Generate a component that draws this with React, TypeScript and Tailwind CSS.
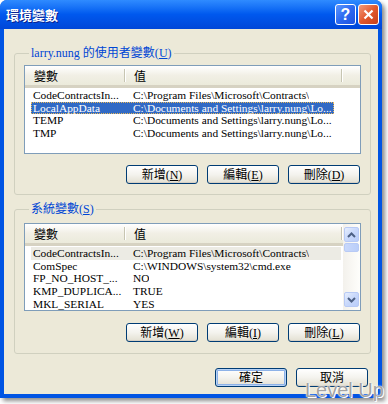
import React from "react";

const serif = "font-['Liberation_Serif','Noto_Sans_CJK_TC',serif]";

function Header({ w2 }: { w2: number }) {
  return (
    <div className="relative flex h-[22px] shrink-0 bg-gradient-to-b from-[#FFFFFF] via-[#F1EFE5] to-[#EBEADB] border-b-[3px] border-[#D6D2C2] text-[12px] text-black">
      <div className="flex w-[99px] items-center pl-[9px] leading-none">變數</div>
      <div className="my-[3px] w-[2px] border-l border-[#C7C5B2] bg-white" />
      <div className="flex items-center pl-[8px] leading-none" style={{ width: w2 }}>
        值
      </div>
      <div className="my-[3px] w-[2px] border-l border-[#C7C5B2] bg-white" />
    </div>
  );
}

type Row = { k: string; v: string; sel?: "blue" | "gray" };

function Rows({ rows, width }: { rows: Row[]; width: number }) {
  return (
    <div className={`flex flex-col pt-[1px] ${serif} text-[11.4px] leading-[12px]`}>
      {rows.map((r, i) => (
        <div key={i} className="flex h-[12.6px] pl-[6px]">
          <div
            className={
              r.sel === "blue"
                ? "flex items-center bg-[#316AC5] text-white outline outline-1 outline-dotted outline-[#E7B85A] -outline-offset-1"
                : r.sel === "gray"
                ? "flex items-center bg-[#ECEBE4] text-black"
                : "flex items-center text-black"
            }
            style={{ width }}
          >
            <div className="w-[93px] shrink-0 overflow-hidden whitespace-nowrap pl-[2px]">{r.k}</div>
            <div className="overflow-hidden whitespace-nowrap pl-[9px]">{r.v}</div>
          </div>
        </div>
      ))}
    </div>
  );
}

function Btn({ label, u, def }: { label: string; u: string; def?: boolean }) {
  return (
    <div
      className={
        def
          ? "flex h-[19px] w-[72px] items-center justify-center rounded-[3px] border border-[#003C74] bg-gradient-to-b from-white via-[#F4F3EE] to-[#E3E0D2] text-[12px] leading-none text-black shadow-[inset_0_0_0_1px_#B7D2F6,inset_0_0_0_2px_#8DB2E8]"
          : "flex h-[19px] w-[72px] items-center justify-center rounded-[3px] border border-[#003C74] bg-gradient-to-b from-white via-[#F4F3EE] to-[#E3E0D2] text-[12px] leading-none text-black shadow-[inset_0_-1px_0_#D6D0C5]"
      }
    >
      <span className={`${serif} text-[12px]`}>
        {label}
        {u ? (
          <>
            (<span className="underline underline-offset-1">{u}</span>)
          </>
        ) : null}
      </span>
    </div>
  );
}

function Chevron({ up }: { up?: boolean }) {
  return (
    <svg width="9" height="6" viewBox="0 0 9 6">
      <path
        d={up ? "M1 5 L4.5 1.5 L8 5" : "M1 1 L4.5 4.5 L8 1"}
        fill="none"
        stroke="#4D6185"
        strokeWidth="2"
      />
    </svg>
  );
}

function SBtn({ children }: { children?: React.ReactNode }) {
  return (
    <div className="flex h-[15px] w-[15px] shrink-0 items-center justify-center rounded-[2px] border border-[#B8CAF5] bg-gradient-to-br from-[#E6EEFD] via-[#C8D8FB] to-[#B9CDF9]">
      {children}
    </div>
  );
}

export default function App() {
  const rows1: Row[] = [
    { k: "CodeContractsIn...", v: "C:\\Program Files\\Microsoft\\Contracts\\" },
    { k: "LocalAppData", v: "C:\\Documents and Settings\\larry.nung\\Lo...", sel: "blue" },
    { k: "TEMP", v: "C:\\Documents and Settings\\larry.nung\\Lo..." },
    { k: "TMP", v: "C:\\Documents and Settings\\larry.nung\\Lo..." },
  ];
  const rows2: Row[] = [
    { k: "CodeContractsIn...", v: "C:\\Program Files\\Microsoft\\Contracts\\", sel: "gray" },
    { k: "ComSpec", v: "C:\\WINDOWS\\system32\\cmd.exe" },
    { k: "FP_NO_HOST_...", v: "NO" },
    { k: "KMP_DUPLICA...", v: "TRUE" },
    { k: "MKL_SERIAL", v: "YES" },
  ];

  return (
    <div className="relative h-[404px] w-[388px] overflow-hidden bg-white font-['Noto_Sans_CJK_TC',sans-serif]">
      <div className="flex h-[398px] w-[382px] flex-col overflow-hidden rounded-t-[7px] bg-[#0054E3] shadow-[3px_3px_4px_rgba(0,0,0,0.45)]">
        {/* title bar */}
        <div className="flex h-[29px] shrink-0 items-center bg-gradient-to-b from-[#2F8BFF] via-[#0058EE] to-[#0046D8] pl-[6px] pr-[3px]">
          <div className="flex-1 text-[13px] font-bold leading-none text-white [text-shadow:1px_1px_0_#0A1E8C]">
            環境變數
          </div>
          <div className="flex gap-[2px]">
            <div className="flex h-[21px] w-[21px] items-center justify-center rounded-[3px] border border-white bg-gradient-to-br from-[#5C96FF] via-[#2D69F0] to-[#1E52E0] text-[16px] font-bold leading-none text-white font-['Liberation_Sans',sans-serif]">
              ?
            </div>
            <div className="flex h-[21px] w-[21px] items-center justify-center rounded-[3px] border border-white bg-gradient-to-br from-[#F09A7A] via-[#E2582C] to-[#C6401A]">
              <svg width="11" height="11" viewBox="0 0 11 11">
                <path d="M1.5 1.5 L9.5 9.5 M9.5 1.5 L1.5 9.5" stroke="white" strokeWidth="2.2" />
              </svg>
            </div>
          </div>
        </div>
        {/* body */}
        <div className="mx-[4px] mb-[4px] flex flex-1 flex-col bg-[#ECE9D8] px-[10px] pt-[17px]">
          <fieldset className="w-[357px] rounded-[3px] border border-[#D0D0BF] px-[9px] pb-[10px]">
            <legend className={`ml-[5px] h-[14px] px-[2px] text-[12px] leading-[14px] text-[#0046D5] ${serif}`}>
              larry.nung 的使用者變數(<span className="underline underline-offset-1">U</span>)
            </legend>
            <div className="mt-[5px] flex h-[89px] flex-col border border-[#7F9DB9] bg-white">
              <Header w2={215} />
              <Rows rows={rows1} width={303} />
            </div>
            <div className="mt-[11px] flex justify-end gap-[9px] pr-[1px]">
              <Btn label="新增" u="N" />
              <Btn label="編輯" u="E" />
              <Btn label="刪除" u="D" />
            </div>
          </fieldset>
          <fieldset className="mt-[7px] w-[357px] rounded-[3px] border border-[#D0D0BF] px-[9px] pb-[11px]">
            <legend className={`ml-[5px] h-[14px] px-[2px] text-[12px] leading-[14px] text-[#0046D5] ${serif}`}>
              系統變數(<span className="underline underline-offset-1">S</span>)
            </legend>
            <div className="mt-[7px] flex h-[88px] border border-[#7F9DB9] bg-white">
              <div className="flex flex-1 flex-col overflow-hidden">
                <Header w2={215} />
                <Rows rows={rows2} width={310} />
              </div>
              <div className="flex w-[17px] flex-col bg-gradient-to-r from-[#F3F1EC] to-[#FEFEFB] px-[1px] py-[3px]">
                <SBtn>
                  <Chevron up />
                </SBtn>
                <div className="mt-[1px] h-[9px] w-[15px] rounded-[2px] border border-[#B8CAF5] bg-gradient-to-r from-[#C8D8FB] to-[#BACEF9]" />
                <div className="flex-1" />
                <SBtn>
                  <Chevron />
                </SBtn>
              </div>
            </div>
            <div className="mt-[12px] flex justify-end gap-[9px] pr-[1px]">
              <Btn label="新增" u="W" />
              <Btn label="編輯" u="I" />
              <Btn label="刪除" u="L" />
            </div>
          </fieldset>
          <div className="mt-[14px] flex justify-end gap-[9px] pr-[0px]">
            <Btn label="確定" u="" def />
            <Btn label="取消" u="" />
          </div>
        </div>
      </div>
      <div className="absolute left-[305px] top-[380px] text-[20px] leading-none tracking-[0px] text-[#A3A3A3] font-['Liberation_Sans',sans-serif] [text-shadow:0_0_1px_white,0_0_2px_white,1px_1px_0_white]">
        Level Up
      </div>
    </div>
  );
}
